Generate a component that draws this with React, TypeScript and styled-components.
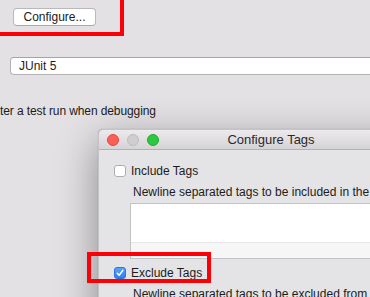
import React from 'react'
import styled, { createGlobalStyle } from 'styled-components'

const GlobalStyle = createGlobalStyle`
  html, body {
    margin: 0;
    padding: 0;
    width: 370px;
    height: 297px;
    overflow: hidden;
    background: #e3e1e4;
    font-family: 'Liberation Sans', Arial, sans-serif;
    color: #1c1c1c;
  }
`

const Page = styled.div`
  position: relative;
  width: 370px;
  height: 297px;
  overflow: hidden;
  display: flex;
  flex-direction: column;
  align-items: flex-start;
`

const ConfigureButton = styled.button`
  margin: 8px 0 0 13px;
  width: 83px;
  height: 18px;
  padding: 0;
  background: #ffffff;
  border: 1px solid #b9b8ba;
  border-bottom-color: #a9a8aa;
  border-radius: 4px;
  font-family: inherit;
  font-size: 12px;
  color: #1c1c1c;
  line-height: 16px;
`

const EngineField = styled.div`
  margin: 31px 0 0 10px;
  width: 370px;
  height: 18px;
  box-sizing: border-box;
  background: #ffffff;
  border: 1px solid #b2b1b3;
  border-top-color: #a4a3a5;
  border-right: none;
  border-radius: 4px 0 0 4px;
  padding-left: 8px;
  font-size: 12px;
  line-height: 16px;
`

const Hint = styled.div`
  margin: 29px 0 0 0;
  font-size: 12px;
  letter-spacing: -0.1px;
  line-height: 15px;
  white-space: nowrap;
`

const Dialog = styled.div`
  position: absolute;
  left: 98px;
  top: 129px;
  width: 344px;
  height: 220px;
  background: #e4e3e5;
  border: 1px solid #c4c3c5;
  border-radius: 5px 5px 0 0;
  box-shadow: 0 12px 40px rgba(0, 0, 0, 0.4), 0 0 1px rgba(0, 0, 0, 0.3);
  display: flex;
  flex-direction: column;
`

const TitleBar = styled.div`
  position: relative;
  height: 19px;
  flex: none;
  display: flex;
  align-items: center;
  padding-left: 8px;
  gap: 8px;
  background: linear-gradient(#eceaed, #d5d3d6);
  border-bottom: 1px solid #b2b1b3;
  border-radius: 5px 5px 0 0;
`

const Light = styled.span<{ $fill: string; $edge: string }>`
  width: 12px;
  height: 12px;
  box-sizing: border-box;
  border-radius: 50%;
  background: ${p => p.$fill};
  border: 1px solid ${p => p.$edge};
`

const Title = styled.div`
  position: absolute;
  left: 0;
  right: 0;
  text-align: center;
  font-size: 13px;
  color: #2a2a2a;
`

const Body = styled.div`
  padding: 14px 0 0 15px;
  display: flex;
  flex-direction: column;
`

const CheckRow = styled.label`
  display: flex;
  align-items: center;
  gap: 5px;
  height: 14px;
  font-size: 12px;
`

const Box = styled.span<{ $checked?: boolean }>`
  width: 12px;
  height: 12px;
  box-sizing: border-box;
  border-radius: 3px;
  display: flex;
  align-items: center;
  justify-content: center;
  background: ${p => (p.$checked ? 'linear-gradient(#5aa2fa, #2f7ef0)' : '#ffffff')};
  border: 1px solid ${p => (p.$checked ? '#2c74db' : '#aeadaf')};
`

const Note = styled.div`
  margin: 7px 0 0 19px;
  font-size: 12px;
  line-height: 15px;
  white-space: nowrap;
`

const TagArea = styled.div`
  margin: 3px 0 0 16px;
  height: 56px;
  box-sizing: border-box;
  background: #ffffff;
  border: 1px solid #c3c2c4;
  border-right: none;
  display: flex;
  flex-direction: column;
  justify-content: flex-end;
`

const ScrollStrip = styled.div`
  height: 15px;
  background: #f6f6f6;
  border-top: 1px solid #e6e6e6;
`

const ExcludeRow = styled(CheckRow)`
  margin-top: 7px;
`

const Highlight = styled.div<{ $left: number; $top: number; $w: number; $h: number }>`
  position: absolute;
  left: ${p => p.$left}px;
  top: ${p => p.$top}px;
  width: ${p => p.$w}px;
  height: ${p => p.$h}px;
  box-sizing: border-box;
  border: 4px solid #fb0007;
`

const Check = () => (
  <svg width="8" height="8" viewBox="0 0 8 8">
    <path d="M1.2 4.2 L3.2 6.3 L6.8 1.4" fill="none" stroke="#fff" strokeWidth="1.5" strokeLinecap="round" strokeLinejoin="round" />
  </svg>
)

export default function App() {
  return (
    <Page>
      <GlobalStyle />
      <ConfigureButton>Configure...</ConfigureButton>
      <EngineField>JUnit 5</EngineField>
      <Hint>ter a test run when debugging</Hint>

      <Dialog>
        <TitleBar>
          <Light $fill="#fc5f57" $edge="#e2463f" />
          <Light $fill="#cfcdd0" $edge="#bdbbbe" />
          <Light $fill="#2ac940" $edge="#1eaa2f" />
          <Title>Configure Tags</Title>
        </TitleBar>
        <Body>
          <CheckRow>
            <Box />
            Include Tags
          </CheckRow>
          <Note>Newline separated tags to be included in the test run</Note>
          <TagArea>
            <ScrollStrip />
          </TagArea>
          <ExcludeRow>
            <Box $checked>
              <Check />
            </Box>
            Exclude Tags
          </ExcludeRow>
          <Note>Newline separated tags to be excluded from the test run</Note>
        </Body>
      </Dialog>

      <Highlight $left={-10} $top={-10} $w={134} $h={46} />
      <Highlight $left={87} $top={252} $w={124} $h={31} />
    </Page>
  )
}
